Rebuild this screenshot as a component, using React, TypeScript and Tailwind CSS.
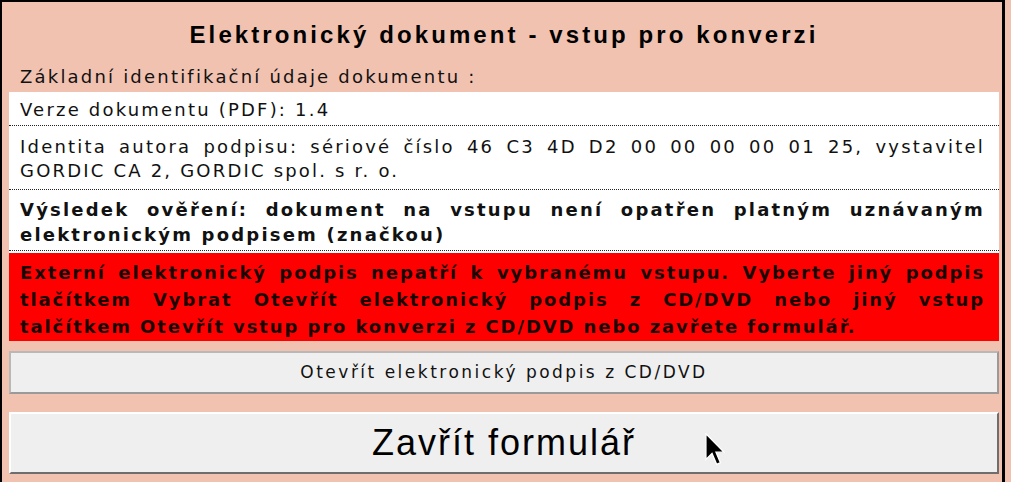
export default function App() {
  const row = "font-['DejaVu_Sans',Verdana,sans-serif] text-[18px] tracking-[2.2px] text-[#111] text-justify"

  return (
    <div className="w-[1011px] h-[482px] bg-[#f2c2b1] overflow-hidden">
      <div className="relative w-[1005px] h-[482px] border-t-2 border-l-2 border-r-[3px] border-black pl-[7px] pr-[3px] flex flex-col">
        {/* header */}
        <h1 className="h-[56px] pt-[10px] leading-[46px] text-center font-['Liberation_Sans',Arial,sans-serif] font-bold text-[24px] tracking-[3.1px] text-black">
          Elektronický dokument - vstup pro konverzi
        </h1>
        <div className={`${row} h-[34px] pt-[7px] leading-[24px] pl-[11px]`}>
          Základní identifikační údaje dokumentu :
        </div>

        {/* document info */}
        <div className="bg-white pb-[2px]">
          <div className={`${row} pt-[6px] pb-[3px] leading-[24px] pl-[11px] pr-[14px] border-b border-dotted border-[#222]`}>
            Verze dokumentu (PDF): 1.4
          </div>
          <div className={`${row} pt-[9px] pb-[6px] leading-[24px] pl-[11px] pr-[14px] border-b border-dotted border-[#222]`}>
            Identita autora podpisu: sériové číslo 46 C3 4D D2 00 00 00 00 01 25, vystavitel GORDIC CA 2, GORDIC spol. s r. o.
          </div>
          <div className={`${row} font-bold tracking-[1.6px] pt-[7px] pb-[3px] leading-[25px] pl-[11px] pr-[14px] border-b border-dotted border-[#222]`}>
            Výsledek ověření: dokument na vstupu není opatřen platným uznávaným elektronickým podpisem (značkou)
          </div>
        </div>

        {/* error */}
        <div className="bg-[#ff0000] pt-[6px] pb-[1px] pl-[11px] pr-[14px] font-['DejaVu_Sans',Verdana,sans-serif] font-bold text-[18px] tracking-[1.9px] leading-[27px] text-[#1a0505] text-justify">
          Externí elektronický podpis nepatří k vybranému vstupu. Vyberte jiný podpis tlačítkem Vybrat Otevřít elektronický podpis z CD/DVD nebo jiný vstup talčítkem Otevřít vstup pro konverzi z CD/DVD nebo zavřete formulář.
        </div>

        <button className="mt-[10px] h-[43px] w-full bg-[#efefef] border-2 border-t-[#b8b8b8] border-l-[#b8b8b8] border-b-[#9a9a9a] border-r-[#9a9a9a] font-['DejaVu_Sans',Tahoma,sans-serif] text-[17px] tracking-[2.5px] text-[#111]">
          Otevřít elektronický podpis z CD/DVD
        </button>

        <button className="mt-[18px] h-[62px] w-full bg-[#efefef] border-2 border-t-white border-l-white border-b-[#6e6e6e] border-r-[#6e6e6e] font-['Liberation_Sans',Arial,sans-serif] text-[36px] tracking-[2px] text-black">
          Zavřít formulář
        </button>

        {/* mouse pointer */}
        <svg className="absolute left-[703px] top-[431px]" width="20" height="33" viewBox="0 0 12 20">
          <path d="M0.5 0.5 L0.5 16 L4.2 12.4 L7 19 L9.3 18 L6.6 11.6 L11.4 11.6 Z" fill="black" stroke="white" strokeWidth="0.8" strokeLinejoin="miter" />
        </svg>
      </div>
    </div>
  )
}
